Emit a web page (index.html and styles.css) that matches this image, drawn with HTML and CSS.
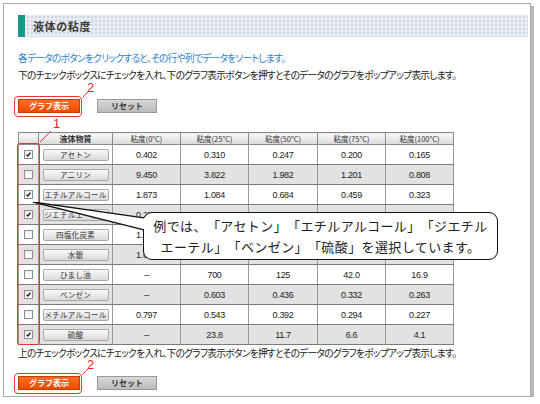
FILE: index.html
```html
<!DOCTYPE html>
<html lang="ja">
<head>
<meta charset="utf-8">
<link rel="stylesheet" href="styles.css">
</head>
<body>
<div class="frame">
  <div class="head"><span class="bar"></span><h1>液体の粘度</h1></div>
  <p class="lead">各データのボタンをクリックすると、その行や列でデータをソートします。</p>
  <p class="note">下のチェックボックスにチェックを入れ、下のグラフ表示ボタンを押すとそのデータのグラフをポップアップ表示します。</p>
  <div class="btnrow">
    <span class="btn btn-graph">グラフ表示</span>
    <span class="btn btn-reset">リセット</span>
    <span class="mark"></span>
    <svg class="tick" width="8" height="8" viewBox="0 0 8 8"><line x1="1.5" y1="7.5" x2="7" y2="2" stroke="#e33" stroke-width="1"/></svg>
    <span class="num">2</span>
  </div>
  <div class="tbl">
    <table>
      <colgroup><col class="c-cb"><col class="c-name"><col class="c-v"><col class="c-v"><col class="c-v5"><col class="c-v"><col class="c-v"></colgroup>
      <thead>
        <tr><th></th><th class="th-name">液体物質</th><th>粘度(0°C)</th><th>粘度(25°C)</th><th>粘度(50°C)</th><th>粘度(75°C)</th><th>粘度(100°C)</th></tr>
      </thead>
      <tbody>
        <tr><td><span class="cb on"><svg viewBox="0 0 9 9"><path d="M2 4.6 L3.7 6.4 L7 2.2" fill="none" stroke="#111" stroke-width="1.6"/></svg></span></td><td><span class="nb">アセトン</span></td><td>0.402</td><td>0.310</td><td>0.247</td><td>0.200</td><td>0.165</td></tr>
        <tr class="g"><td><span class="cb"></span></td><td><span class="nb">アニリン</span></td><td>9.450</td><td>3.822</td><td>1.982</td><td>1.201</td><td>0.808</td></tr>
        <tr><td><span class="cb on"><svg viewBox="0 0 9 9"><path d="M2 4.6 L3.7 6.4 L7 2.2" fill="none" stroke="#111" stroke-width="1.6"/></svg></span></td><td><span class="nb">エチルアルコール</span></td><td>1.873</td><td>1.084</td><td>0.684</td><td>0.459</td><td>0.323</td></tr>
        <tr class="g"><td><span class="cb on"><svg viewBox="0 0 9 9"><path d="M2 4.6 L3.7 6.4 L7 2.2" fill="none" stroke="#111" stroke-width="1.6"/></svg></span></td><td><span class="nb">ジエチルエーテル</span></td><td>0.284</td><td>0.224</td><td>0.181</td><td>0.149</td><td>0.118</td></tr>
        <tr><td><span class="cb"></span></td><td><span class="nb">四塩化炭素</span></td><td>1.329</td><td>0.908</td><td>0.654</td><td>0.493</td><td>0.384</td></tr>
        <tr class="g"><td><span class="cb"></span></td><td><span class="nb">水銀</span></td><td>1.685</td><td>1.528</td><td>1.407</td><td>1.313</td><td>1.240</td></tr>
        <tr><td><span class="cb"></span></td><td><span class="nb">ひまし油</span></td><td>–</td><td>700</td><td>125</td><td>42.0</td><td>16.9</td></tr>
        <tr class="g"><td><span class="cb on"><svg viewBox="0 0 9 9"><path d="M2 4.6 L3.7 6.4 L7 2.2" fill="none" stroke="#111" stroke-width="1.6"/></svg></span></td><td><span class="nb">ベンゼン</span></td><td>–</td><td>0.603</td><td>0.436</td><td>0.332</td><td>0.263</td></tr>
        <tr><td><span class="cb"></span></td><td><span class="nb">メチルアルコール</span></td><td>0.797</td><td>0.543</td><td>0.392</td><td>0.294</td><td>0.227</td></tr>
        <tr class="g"><td><span class="cb on"><svg viewBox="0 0 9 9"><path d="M2 4.6 L3.7 6.4 L7 2.2" fill="none" stroke="#111" stroke-width="1.6"/></svg></span></td><td><span class="nb">硫酸</span></td><td>–</td><td>23.8</td><td>11.7</td><td>6.6</td><td>4.1</td></tr>
      </tbody>
    </table>
    <span class="mark1"></span>
    <svg class="tick1" width="13" height="13" viewBox="0 0 13 13"><line x1="1" y1="12" x2="12" y2="1" stroke="#e33" stroke-width="1"/></svg>
    <span class="num num1">1</span>
    <div class="callout">例では、「アセトン」「エチルアルコール」「ジエチル<br>エーテル」「ベンゼン」「硫酸」を選択しています。</div>
    <svg class="tail" width="116" height="32" viewBox="0 0 116 32"><polygon points="0,0 114,16.3 114,28.5" fill="#fff"/><line x1="0" y1="0" x2="111" y2="15.9" stroke="#111" stroke-width="1.3"/><line x1="0" y1="0" x2="111" y2="27.8" stroke="#111" stroke-width="1.3"/></svg>
  </div>
  <p class="note">上のチェックボックスにチェックを入れ、下のグラフ表示ボタンを押すとそのデータのグラフをポップアップ表示します。</p>
  <div class="btnrow btnrow-b">
    <span class="btn btn-graph">グラフ表示</span>
    <span class="btn btn-reset">リセット</span>
    <span class="mark"></span>
    <svg class="tick" width="8" height="8" viewBox="0 0 8 8"><line x1="1.5" y1="7.5" x2="7" y2="2" stroke="#e33" stroke-width="1"/></svg>
    <span class="num">2</span>
  </div>
</div>
</body>
</html>
```
FILE: styles.css
```css
body {
  margin: 0;
  background: #fff;
  font-family: "Noto Sans CJK JP", "Liberation Sans", sans-serif;
}
.frame {
  box-sizing: border-box;
  margin: 3px 0 0 3px;
  width: 528px;
  height: 394px;
  border: 1px solid #a9a9a9;
  box-shadow: 3px 3px 0 #b8b8b8;
  padding: 11px 2px 0 14px;
}
.head {
  display: flex;
  height: 22px;
  background-color: #e9ebee;
  background-image: radial-gradient(circle, #c3d6e8 0.7px, transparent 0.9px);
  background-size: 4px 4px;
}
.head .bar {
  width: 7px;
  background: #17998a;
}
.head h1 {
  margin: 0;
  padding-left: 8px;
  font-size: 11px;
  line-height: 22px;
  font-weight: bold;
  color: #3a3a3a;
  letter-spacing: 0.6px;
}
.lead, .note {
  margin: 0;
  font-size: 9.7px;
  line-height: 17px;
  font-feature-settings: "palt";
  letter-spacing: -0.7px;
  white-space: nowrap;
}
.lead {
  margin-top: 13px;
  color: #2f7fd0;
}
.note {
  color: #222;
}
.btnrow {
  position: relative;
  display: flex;
  gap: 17px;
  height: 14px;
  margin-top: 15px;
}
.btnrow-b {
  margin-top: 14px;
}
.btn {
  box-sizing: border-box;
  width: 62px;
  height: 14px;
  font-size: 8px;
  line-height: 12px;
  font-weight: bold;
  text-align: center;
}
.btn-graph {
  background: linear-gradient(#ff6e25, #ec4a00);
  border: 1px solid #c23e00;
  color: #fff;
}
.btn-reset {
  width: 60px;
  background: linear-gradient(#d8d8d8, #bababa);
  border: 1px solid #999;
  color: #333;
}
.mark {
  position: absolute;
  box-sizing: border-box;
  left: -4px;
  top: -3px;
  width: 68px;
  height: 21px;
  border: 1px solid #e33;
  border-radius: 4px;
}
.tick {
  position: absolute;
  left: 63px;
  top: -9px;
}
.num {
  position: absolute;
  left: 69px;
  top: -18px;
  font-family: "Liberation Sans", sans-serif;
  font-size: 13px;
  line-height: 14px;
  color: #e22;
}
.tbl {
  position: relative;
  width: 435px;
  margin-top: 19px;
}
table {
  width: 435px;
  table-layout: fixed;
  border-collapse: collapse;
  border: 1px solid #666;
}
.c-cb { width: 20px; }
.c-name { width: 74px; }
.c-v { width: 68px; }
.c-v5 { width: 69px; }
th {
  height: 11px;
  padding: 0;
  font-size: 7.5px;
  font-weight: normal;
  line-height: 10px;
  color: #333;
  background: linear-gradient(#fbfbfb, #d9d9d9);
  border: 1px solid #8a8a8a;
  white-space: nowrap;
}
th.th-name {
  font-weight: bold;
  font-size: 8px;
}
td {
  height: 19px;
  padding: 0;
  text-align: center;
  font-family: "Liberation Sans", sans-serif;
  font-size: 9px;
  letter-spacing: -0.3px;
  color: #222;
  border: 1px solid #7a7a7a;
  border-left-color: #999;
  border-right-color: #999;
}
tr.g td {
  background: #e2e2e2;
}
.cb {
  display: block;
  box-sizing: border-box;
  width: 9px;
  height: 9px;
  margin: 0 auto;
  border: 1px solid #8c8c8c;
  background: linear-gradient(#f0f0f0, #fdfdfd);
}
.cb svg {
  display: block;
  width: 7px;
  height: 7px;
}
.nb {
  display: block;
  box-sizing: border-box;
  width: 66px;
  height: 12px;
  margin: 0 auto;
  border: 1px solid #a8a8a8;
  border-radius: 2px;
  background: linear-gradient(#fafafa, #d9d9d9);
  font-family: "Noto Sans CJK JP", sans-serif;
  font-size: 7.5px;
  line-height: 10px;
  letter-spacing: 0.3px;
  color: #333;
  white-space: nowrap;
}
.mark1 {
  position: absolute;
  box-sizing: border-box;
  left: -1px;
  top: 11px;
  width: 23px;
  height: 202px;
  border: 1px solid #e33;
  border-radius: 3px;
}
.tick1 {
  position: absolute;
  left: 21px;
  top: -2px;
}
.num1 {
  left: 35px;
  top: -15px;
}
.callout {
  position: absolute;
  box-sizing: border-box;
  left: 125px;
  top: 80px;
  width: 355px;
  height: 48px;
  padding-top: 2px;
  border: 1.4px solid #111;
  border-radius: 9px;
  background: #fff;
  font-family: "Noto Sans CJK JP", sans-serif;
  font-size: 13px;
  line-height: 21px;
  text-align: center;
  text-spacing-trim: space-all;
  letter-spacing: 0.4px;
  color: #222;
  white-space: nowrap;
}
.tail {
  position: absolute;
  left: 15px;
  top: 70px;
}
```
